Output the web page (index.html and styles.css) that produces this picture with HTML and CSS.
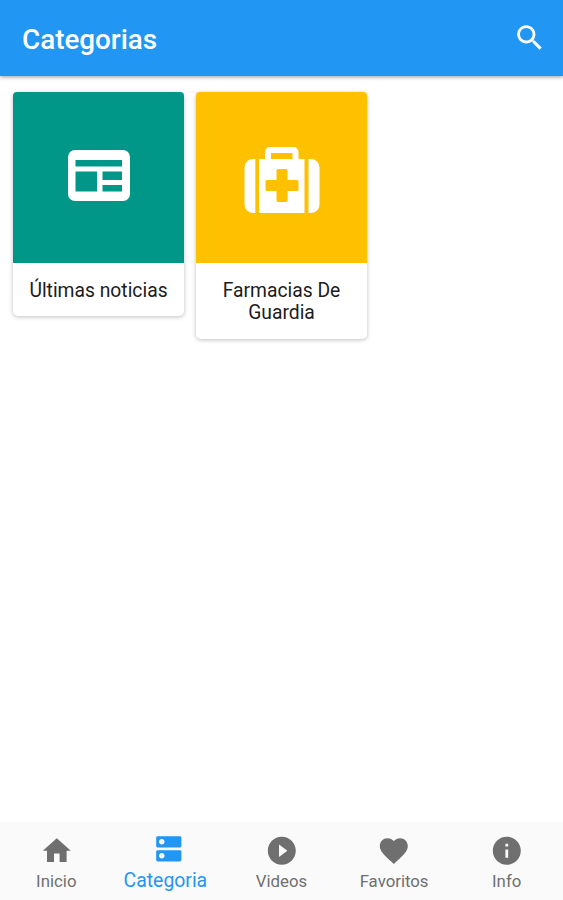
FILE: index.html
```html
<!DOCTYPE html>
<html lang="es">
<head>
<meta charset="utf-8">
<title>Categorias</title>
<link rel="stylesheet" href="styles.css">
</head>
<body>
<header class="bar">
  <h1>Categorias</h1>
  <svg class="icon" viewBox="0 0 24 24"><path d="M15.5 14h-.79l-.28-.27C15.41 12.59 16 11.11 16 9.5 16 5.91 13.09 3 9.5 3S3 5.91 3 9.5 5.91 16 9.5 16c1.61 0 3.09-.59 4.23-1.57l.27.28v.79l5 4.99L20.49 19l-4.99-5zm-6 0C7.01 14 5 11.99 5 9.5S7.01 5 9.5 5 14 7.01 14 9.5 11.99 14 9.5 14z"/></svg>
</header>
<main class="grid">
  <article class="card">
    <div class="cover news">
      <svg width="62" height="51" viewBox="0 0 62 51"><path fill-rule="evenodd" d="M7 0H55a7 7 0 0 1 7 7V44a7 7 0 0 1-7 7H7a7 7 0 0 1-7-7V7a7 7 0 0 1 7-7zM7.5 10v6.5h46.500V10zM7.500 21.500v20H29v-20zM34.500 21.500V30H54v-8.500zM34.500 35v6.500H54V35z"/></svg>
    </div>
    <p>Últimas noticias</p>
  </article>
  <article class="card">
    <div class="cover pharmacy">
      <svg width="76" height="66" viewBox="0 0 76 66"><path fill-rule="evenodd" d="M15 12h6V5a5 5 0 0 1 5-5H49.500a5 5 0 0 1 5 5v7h6v54H15zM27 12H48.500V6H27zM34 22a1.500 1.500 0 0 0-1.500 1.500V33H23a1.500 1.500 0 0 0-1.500 1.500v8A1.500 1.500 0 0 0 23 44h9.500v9.500A1.500 1.500 0 0 0 34 55h8a1.500 1.500 0 0 0 1.500-1.500V44H53a1.500 1.500 0 0 0 1.500-1.500v-8A1.500 1.500 0 0 0 53 33h-9.500v-9.500A1.500 1.500 0 0 0 42 22z"/><path d="M11.300 12v54H9a8.500 8.500 0 0 1-8.500-8.500v-37A8.500 8.500 0 0 1 9 12zM64.500 12v54H67a8.500 8.500 0 0 0 8.500-8.500v-37A8.500 8.500 0 0 0 67 12z"/></svg>
    </div>
    <p>Farmacias De Guardia</p>
  </article>
</main>
<nav class="tabs">
  <a class="tab"><svg class="icon" viewBox="0 0 24 24"><path d="M10 20v-6h4v6h5v-8h3L12 3 2 12h3v8z"/></svg><span>Inicio</span></a>
  <a class="tab active"><svg class="icon" viewBox="0 0 24 24"><path d="M20 13H4c-.55 0-1 .45-1 1v6c0 .55.45 1 1 1h16c.55 0 1-.45 1-1v-6c0-.55-.45-1-1-1zM7 19c-1.100 0-2-.9-2-2s.9-2 2-2 2 .9 2 2-.9 2-2 2zM20 3H4c-.55 0-1 .45-1 1v6c0 .55.45 1 1 1h16c.55 0 1-.45 1-1V4c0-.55-.45-1-1-1zM7 9c-1.100 0-2-.9-2-2s.9-2 2-2 2 .9 2 2-.9 2-2 2z"/></svg><span>Categoria</span></a>
  <a class="tab"><svg class="icon" viewBox="0 0 24 24"><path d="M12 2C6.480 2 2 6.480 2 12s4.480 10 10 10 10-4.480 10-10S17.520 2 12 2zm-2 14.500v-9l6 4.500-6 4.500z"/></svg><span>Videos</span></a>
  <a class="tab"><svg class="icon" viewBox="0 0 24 24"><path d="M12 21.350l-1.450-1.320C5.400 15.360 2 12.280 2 8.500 2 5.420 4.420 3 7.500 3c1.740 0 3.410.81 4.500 2.090C13.090 3.810 14.760 3 16.500 3 19.580 3 22 5.420 22 8.500c0 3.780-3.400 6.860-8.550 11.540L12 21.350z"/></svg><span>Favoritos</span></a>
  <a class="tab"><svg class="icon" viewBox="0 0 24 24"><path d="M12 2C6.480 2 2 6.480 2 12s4.480 10 10 10 10-4.480 10-10S17.520 2 12 2zm1 15h-2v-6h2v6zm0-8h-2V7h2v2z"/></svg><span>Info</span></a>
</nav>
</body>
</html>
```
FILE: styles.css
```css
* { box-sizing: border-box; }
body {
  margin: 0;
  height: 900px;
  display: flex;
  flex-direction: column;
  background: #fff;
  font-family: Roboto, sans-serif;
  color: #1c1c1c;
}
svg { display: block; fill: currentColor; }
.icon { width: 33.6px; height: 33.6px; }
.bar {
  height: 76px;
  flex: none;
  display: flex;
  align-items: center;
  justify-content: space-between;
  padding: 3px 16.6px 0 22px;
  background: #2196f3;
  color: #fff;
  box-shadow: 0 1px 4px rgba(0, 0, 0, .4);
}
.bar .icon { margin-top: -4px; }
h1 { margin: 0; font-size: 27.8px; font-weight: 500; line-height: 32px; }
.grid {
  flex: 1;
  display: flex;
  align-items: flex-start;
  gap: 12px;
  padding: 16px 13px;
}
.card {
  width: 171px;
  border-radius: 5px;
  background: #fff;
  box-shadow: 0 1px 4px rgba(0, 0, 0, .26);
}
.cover {
  height: 170.500px;
  border-radius: 4px 4px 0 0;
  color: #fff;
}
.news { background: #009688; padding: 58px 0 0 55px; }
.pharmacy { background: #ffc000; padding: 54.500px 0 0 48px; }
.card p {
  margin: 0;
  padding: 17px 14px 14px;
  text-align: center;
  font-size: 19.300px;
  line-height: 22.500px;
}
.tabs {
  height: 78px;
  flex: none;
  display: flex;
  background: #fafafa;
  color: #6f6f6f;
}
.tab {
  flex: 1;
  display: flex;
  flex-direction: column;
  align-items: center;
  padding-top: 12px;
  font-size: 16.800px;
}
.tab span { margin-top: 3px; line-height: 20px; }
.tab.active { color: #2196f3; padding-top: 10px; font-size: 19.400px; }
.tab.active span { margin-top: 4px; line-height: 22px; margin-left: -7px; }
```
